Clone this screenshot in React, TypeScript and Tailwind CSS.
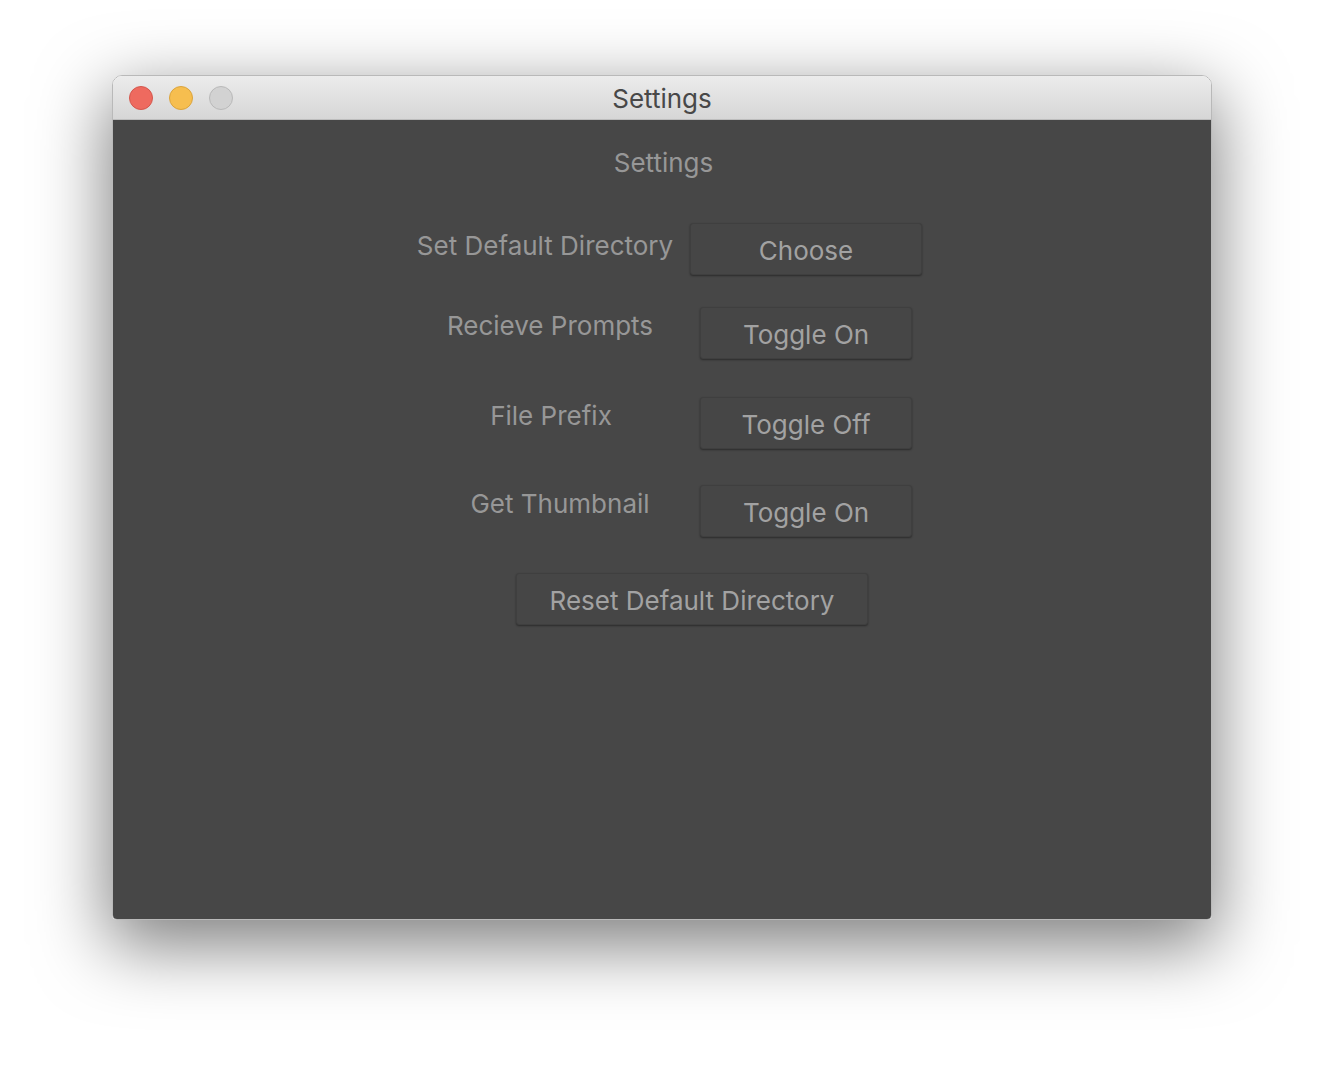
import React from 'react';

const font = { fontFamily: 'Inter, "Noto Sans", sans-serif' };

interface RowProps {
  label: string;
  action: string;
  pad: string;
  labelBox: string;
  btnBox: string;
  top: string;
  labelTop: string;
}

function SettingRow({ label, action, pad, labelBox, btnBox, top, labelTop }: RowProps) {
  return (
    <div className={`flex items-start ${pad} ${top}`}>
      <div className={`${labelBox} ${labelTop} text-center text-[26px] leading-[32px] text-[#979797]`}>{label}</div>
      <button
        type="button"
        className={`${btnBox} h-[52px] rounded-[3px] border border-[#3f3f3f] bg-[#464646] text-[26px] text-[#a2a2a2] shadow-[0_1px_2px_rgba(0,0,0,0.4)] pt-[3px]`}
      >
        {action}
      </button>
    </div>
  );
}

export default function App() {
  return (
    <div className="min-h-[1068px] bg-white pt-[75px] pl-[112px]" style={font}>
      <div className="w-[1100px] h-[845px] flex flex-col rounded-t-[10px] rounded-b-[5px] overflow-hidden shadow-[0_22px_70px_4px_rgba(0,0,0,0.5)] border border-[#b9b9b9]">
        {/* title bar */}
        <div className="relative h-[44px] shrink-0 flex items-center justify-center bg-gradient-to-b from-[#ececec] to-[#d6d6d6] border-b border-[#bdbdbd]">
          <div className="absolute left-[16px] top-[10px] flex gap-[16px]">
            <span className="w-[24px] h-[24px] rounded-full bg-[#ee6a5f] border border-[#d4574d]" />
            <span className="w-[24px] h-[24px] rounded-full bg-[#f6be4f] border border-[#dba43d]" />
            <span className="w-[24px] h-[24px] rounded-full bg-[#d2d2d2] border border-[#b9b9b9]" />
          </div>
          <span className="text-[26px] text-[#484848] pt-[2px]">Settings</span>
        </div>

        {/* content */}
        <div className="flex-1 bg-[#474747] flex flex-col">
          <div className="pt-[27px] text-center text-[26px] leading-[32px] text-[#979797] pl-[3px]">Settings</div>

          <SettingRow
            label="Set Default Directory"
            action="Choose"
            pad="pl-[292px]"
            labelBox="w-[280px]"
            btnBox="ml-[5px] w-[232px]"
            top="mt-[44px]"
            labelTop="pt-[7px]"
          />
          <SettingRow
            label="Recieve Prompts"
            action="Toggle On"
            pad="pl-[317px]"
            labelBox="w-[240px]"
            btnBox="ml-[30px] w-[212px]"
            top="mt-[32px]"
            labelTop="pt-[3px]"
          />
          <SettingRow
            label="File Prefix"
            action="Toggle Off"
            pad="pl-[318px]"
            labelBox="w-[240px]"
            btnBox="ml-[29px] w-[212px]"
            top="mt-[38px]"
            labelTop="pt-[3px]"
          />
          <SettingRow
            label="Get Thumbnail"
            action="Toggle On"
            pad="pl-[327px]"
            labelBox="w-[240px]"
            btnBox="ml-[20px] w-[212px]"
            top="mt-[36px]"
            labelTop="pt-[3px]"
          />

          <div className="mt-[36px] pl-[403px]">
            <button
              type="button"
              className="w-[352px] h-[52px] rounded-[3px] border border-[#3f3f3f] bg-[#464646] text-[26px] text-[#a2a2a2] shadow-[0_1px_2px_rgba(0,0,0,0.4)] pt-[2px]"
            >
              Reset Default Directory
            </button>
          </div>
        </div>
      </div>
    </div>
  );
}
